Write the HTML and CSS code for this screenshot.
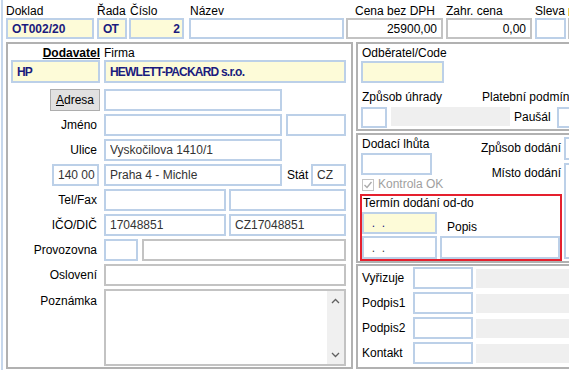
FILE: index.html
```html
<!DOCTYPE html>
<html lang="cs">
<head>
    <meta charset="UTF-8">
    <meta name="viewport" content="width=device-width, initial-scale=1.0">
    <title>Objednávka - OT002/20</title>
    <link rel="stylesheet" href="styles.css">
</head>
<body>
<div class="window">

    <!-- Hlavička dokladu -->
    <div class="head">
        <div class="hfield f-doklad">
            <label>Doklad</label>
            <input type="text" class="inp yellow strong" value="OT002/20">
        </div>
        <div class="hfield f-rada">
            <label>Řada</label>
            <input type="text" class="inp yellow strong caps-tight" value="OT">
        </div>
        <div class="hfield f-cislo">
            <label>Číslo</label>
            <input type="text" class="inp yellow strong num" value="2">
        </div>
        <div class="hfield f-nazev">
            <label>Název</label>
            <input type="text" class="inp" value="">
        </div>
        <div class="hfield f-cena">
            <label>Cena bez DPH</label>
            <input type="text" class="inp gray num" value="25900,00">
        </div>
        <div class="hfield f-zahr">
            <label>Zahr. cena</label>
            <input type="text" class="inp gray num" value="0,00">
        </div>
        <div class="hfield f-sleva">
            <label>Sleva</label>
            <input type="text" class="inp" value="">
        </div>
        <div class="hfield f-mena">
            <span class="flag"></span>
            <input type="text" class="inp gray" value="">
        </div>
    </div>

    <div class="main">

        <!-- Dodavatel -->
        <div class="panel supplier">
            <div class="row caps">
                <div class="lbl"><b><u>Dodavatel</u></b></div>
                <span>Firma</span>
            </div>
            <div class="row firm">
                <input type="text" class="inp yellow strong caps-tight hp" value="HP">
                <input type="text" class="inp yellow strong caps-tight w242" value="HEWLETT-PACKARD s.r.o.">
            </div>
            <div class="row adresa">
                <div class="lbl cell">
                    <button class="btn"><u>A</u>dresa</button>
                </div>
                <input type="text" class="inp w178" value="">
            </div>
            <div class="row">
                <div class="lbl">Jméno</div>
                <input type="text" class="inp w178" value="">
                <input type="text" class="inp w60" value="">
            </div>
            <div class="row">
                <div class="lbl">Ulice</div>
                <input type="text" class="inp w178" value="Vyskočilova 1410/1">
            </div>
            <div class="row">
                <div class="lbl cell">
                    <input type="text" class="inp psc" value="140 00">
                </div>
                <input type="text" class="inp w178" value="Praha 4 - Michle">
                <span class="stat">Stát</span>
                <input type="text" class="inp w35" value="CZ">
            </div>
            <div class="row">
                <div class="lbl">Tel/Fax</div>
                <input type="text" class="inp w122" value="">
                <input type="text" class="inp w117" value="">
            </div>
            <div class="row">
                <div class="lbl">IČO/DIČ</div>
                <input type="text" class="inp w122" value="17048851">
                <input type="text" class="inp w117" value="CZ17048851">
            </div>
            <div class="row">
                <div class="lbl">Provozovna</div>
                <input type="text" class="inp w34" value="">
                <input type="text" class="inp gray w204" value="">
            </div>
            <div class="row">
                <div class="lbl">Oslovení</div>
                <input type="text" class="inp gray w242" value="">
            </div>
            <div class="row memo-row">
                <div class="lbl">Poznámka</div>
                <div class="memo">
                    <div class="memo-text"></div>
                    <div class="scroll">
                        <svg width="9" height="6" viewBox="0 0 9 6"><path d="M1 5 L4.5 1.5 L8 5" fill="none" stroke="#606060" stroke-width="1.3"/></svg>
                        <svg width="9" height="6" viewBox="0 0 9 6"><path d="M1 1 L4.5 4.5 L8 1" fill="none" stroke="#606060" stroke-width="1.3"/></svg>
                    </div>
                </div>
            </div>
        </div>

        <div class="side">

            <!-- Odběratel, platba -->
            <div class="panel p1">
                <div class="cap">Odběratel/Code</div>
                <input type="text" class="inp yellow odb" value="">
                <div class="caps2">
                    <span>Způsob úhrady</span>
                    <span>Platební podmínky</span>
                </div>
                <div class="uhrada">
                    <input type="text" class="inp kod" value="">
                    <div class="bar"></div>
                    <span class="pausal">Paušál</span>
                    <input type="text" class="inp pau" value="">
                </div>
            </div>

            <!-- Dodání -->
            <div class="panel p2">
                <div class="p2-main">
                    <div class="p2-top">
                        <div class="lhuta">
                            <div class="cap">Dodací lhůta</div>
                            <input type="text" class="inp w71" value="">
                            <div class="check">
                                <span class="chk">
                                    <svg width="10" height="10" viewBox="0 0 10 10"><path d="M1.5 5 L4 7.5 L8.5 2" fill="none" stroke="#ababab" stroke-width="1.4"/></svg>
                                </span>
                                Kontrola OK
                            </div>
                        </div>
                        <div class="dl-labels">
                            <div class="dl1">Způsob dodání</div>
                            <div class="dl2">Místo dodání</div>
                        </div>
                    </div>
                    <div class="term">
                        <div class="term-cap">Termín dodání od-do</div>
                        <div class="term-row">
                            <input type="text" class="inp yellow date" value="  .  .">
                            <span class="popis">Popis</span>
                        </div>
                        <div class="term-row second">
                            <input type="text" class="inp date dim" value="  .  .">
                            <input type="text" class="inp w120" value="">
                        </div>
                    </div>
                </div>
                <div class="p2-side">
                    <input type="text" class="inp zpusob" value="">
                    <div class="inp misto"></div>
                </div>
            </div>

            <!-- Podpisy -->
            <div class="panel p3">
                <div class="line">
                    <span>Vyřizuje</span>
                    <input type="text" class="inp" value="">
                    <div class="bar"></div>
                </div>
                <div class="line">
                    <span>Podpis1</span>
                    <input type="text" class="inp" value="">
                    <div class="bar"></div>
                </div>
                <div class="line">
                    <span>Podpis2</span>
                    <input type="text" class="inp" value="">
                    <div class="bar"></div>
                </div>
                <div class="line">
                    <span>Kontakt</span>
                    <input type="text" class="inp" value="">
                    <div class="bar"></div>
                </div>
            </div>

        </div>
    </div>
</div>
</body>
</html>
```

FILE: styles.css
```css
/* Global */
* {
    box-sizing: border-box;
}

html, body {
    margin: 0;
    padding: 0;
    overflow: hidden;
    background: #fff;
}

body {
    font-family: "Liberation Sans", Arial, sans-serif;
    font-size: 12px;
    line-height: 14px;
    color: #000;
}

.window {
    width: 640px;
    height: 370px;
    margin-left: 1px;
    border-left: 2px solid #c6d7ec;
}

/* Edit boxes */
.inp {
    display: block;
    flex: none;
    height: 22px;
    margin: 0;
    padding: 0 4px;
    border: 2px solid #bcd0e8;
    border-radius: 0;
    background: #fff;
    font: inherit;
    color: #333;
    outline: none;
}

.inp.gray {
    border-color: #c3c3c3;
}

.inp.yellow {
    background: #fdfbd8;
}

.inp.strong {
    font-weight: bold;
    color: #1b1b7e;
}

.inp.caps-tight {
    letter-spacing: -0.8px;
}

.inp.num {
    text-align: right;
    color: #000;
}

.inp.strong.num {
    color: #1b1b7e;
    padding-right: 2px;
}

.inp.date {
    width: 75px;
    padding-left: 1px;
    color: #1b1b7e;
}

.inp.date.dim {
    color: #444;
}

.bar {
    flex: none;
    height: 19px;
    background: #efefef;
}

/* Header */
.head {
    display: flex;
    padding: 5px 0 0 3px;
}

.hfield {
    display: flex;
    flex-direction: column;
    flex: none;
}

.hfield label {
    height: 13px;
    line-height: 13px;
    white-space: nowrap;
}

.hfield .inp {
    width: 100%;
    height: 21px;
}

.f-doklad { width: 88px; }
.f-rada { width: 30px; margin-left: 3px; }
.f-cislo { width: 55px; margin-left: 2px; }
.f-nazev { width: 155px; margin-left: 5px; }
.f-cena { width: 97px; margin-left: 2px; }
.f-zahr { width: 86px; margin-left: 3px; }
.f-sleva { width: 31px; margin-left: 3px; }
.f-mena { width: 40px; margin-left: 2px; }

.f-cislo label,
.f-nazev label {
    padding-left: 1px;
}

.f-cena label {
    padding-left: 9px;
}

.flag {
    display: block;
    width: 8px;
    height: 13px;
    border-top: 3px solid #fff;
    border-bottom: 2px solid #fff;
    background: #f3cf4a;
}

/* Main area */
.main {
    display: flex;
    align-items: flex-start;
    margin-top: 3px;
    padding-left: 3px;
}

.panel {
    flex: none;
    border: 2px solid #b1b1b1;
}

/* Supplier panel */
.supplier {
    width: 347px;
    height: 327px;
}

.row {
    display: flex;
    align-items: center;
    height: 22px;
    margin-top: 3px;
}

.lbl {
    flex: none;
    width: 92px;
    margin-right: 4px;
    padding-right: 3px;
    text-align: right;
    white-space: nowrap;
}

.lbl.cell {
    display: flex;
    justify-content: flex-end;
    padding-right: 0;
}

.row.caps {
    height: 14px;
    margin-top: 2px;
}

.row.caps .lbl {
    padding-right: 0;
}

.row.firm {
    height: 23px;
    margin-top: 0;
}

.row.firm .inp {
    height: 23px;
}

.row.adresa {
    margin-top: 6px;
}

.hp { width: 89px; margin-left: 3px !important; margin-right: 4px !important; }
.w242 { width: 242px; }
.w178 { width: 178px; }
.w60 { width: 60px; margin-left: 4px !important; }
.w122 { width: 122px; }
.w117 { width: 117px; margin-left: 3px !important; }
.w35 { width: 35px; }
.w34 { width: 34px; }
.w204 { width: 204px; margin-left: 4px !important; }

.btn {
    width: 50px;
    height: 22px;
    padding: 0;
    border: 1px solid #adadad;
    background: #e1e1e1;
    font: inherit;
    color: #000;
}

.psc {
    width: 47px;
    margin-right: 1px !important;
    padding: 0 1px 0 4px;
}

.stat {
    flex: none;
    width: 24px;
    margin-left: 5px;
}

.memo-row {
    height: 77px;
    align-items: flex-start;
}

.memo-row .lbl {
    padding-top: 5px;
}

.memo {
    display: flex;
    width: 242px;
    height: 77px;
    border: 2px solid #c3c3c3;
}

.memo-text {
    flex: 1;
}

.scroll {
    display: flex;
    flex-direction: column;
    justify-content: space-between;
    align-items: center;
    width: 17px;
    padding: 7px 0 6px;
    background: #f0f0f0;
}

.scroll svg {
    display: block;
}

/* Right column */
.side {
    flex: none;
    width: 260px;
    margin-left: 3px;
    display: flex;
    flex-direction: column;
}

.cap {
    padding-left: 4px;
    white-space: nowrap;
}

.p1 {
    height: 89px;
}

.p1 .cap {
    padding-top: 2px;
}

.odb {
    width: 83px;
    margin: 1px 0 0 3px;
}

.caps2 {
    display: flex;
    margin-top: 7px;
    padding-left: 4px;
    white-space: nowrap;
}

.caps2 span:first-child {
    flex: none;
    width: 120px;
}

.uhrada {
    display: flex;
    align-items: flex-start;
    margin-top: 3px;
    padding-left: 3px;
}

.kod {
    width: 26px;
    height: 21px;
}

.uhrada .bar {
    width: 119px;
    margin-left: 4px;
}

.pausal {
    margin-left: 4px;
    line-height: 21px;
}

.pau {
    width: 30px;
    height: 21px;
    margin-left: 6px;
}

/* Delivery panel */
.p2 {
    height: 130px;
    margin-top: 2px;
    display: flex;
}

.p2-main {
    flex: none;
    width: 206px;
}

.p2-top {
    display: flex;
    height: 59px;
}

.lhuta {
    flex: none;
    width: 110px;
    padding-top: 2px;
}

.w71 {
    width: 71px;
    margin: 2px 0 0 3px;
}

.check {
    display: flex;
    align-items: center;
    height: 13px;
    margin-top: 3px;
    padding-left: 4px;
    line-height: 13px;
    color: #a0a0a0;
    white-space: nowrap;
}

.chk {
    display: flex;
    align-items: center;
    justify-content: center;
    width: 12px;
    height: 12px;
    margin-right: 4px;
    border: 1px solid #c4c4c4;
    background: #fff;
}

.dl-labels {
    flex: 1;
    padding-right: 3px;
    text-align: right;
    white-space: nowrap;
}

.dl1 {
    padding-top: 6px;
}

.dl2 {
    margin-top: 11px;
}

.term {
    width: 202px;
    height: 67px;
    margin-left: 2px;
    border: 2px solid #e5202e;
}

.term-cap {
    padding-left: 1px;
    white-space: nowrap;
}

.term-row {
    display: flex;
    align-items: flex-end;
    margin-top: 2px;
}

.popis {
    margin-left: 10px;
}

.term-row.second .inp {
    height: 23px;
}

.w120 {
    width: 120px;
    margin-left: 3px !important;
}

.p2-side {
    flex: none;
    width: 40px;
}

.zpusob {
    width: 40px;
    height: 23px;
    margin-top: 2px;
}

.misto {
    width: 40px;
    height: 96px;
    margin-top: 3px;
}

/* Signatures panel */
.p3 {
    height: 105px;
    margin-top: 1px;
}

.line {
    display: flex;
    align-items: center;
    height: 22px;
    margin-top: 3px;
    padding-left: 4px;
}

.line:first-child {
    margin-top: 1px;
}

.line span {
    flex: none;
    width: 51px;
}

.line .inp {
    width: 60px;
}

.line .bar {
    flex: 1;
    margin-left: 3px;
}
```
